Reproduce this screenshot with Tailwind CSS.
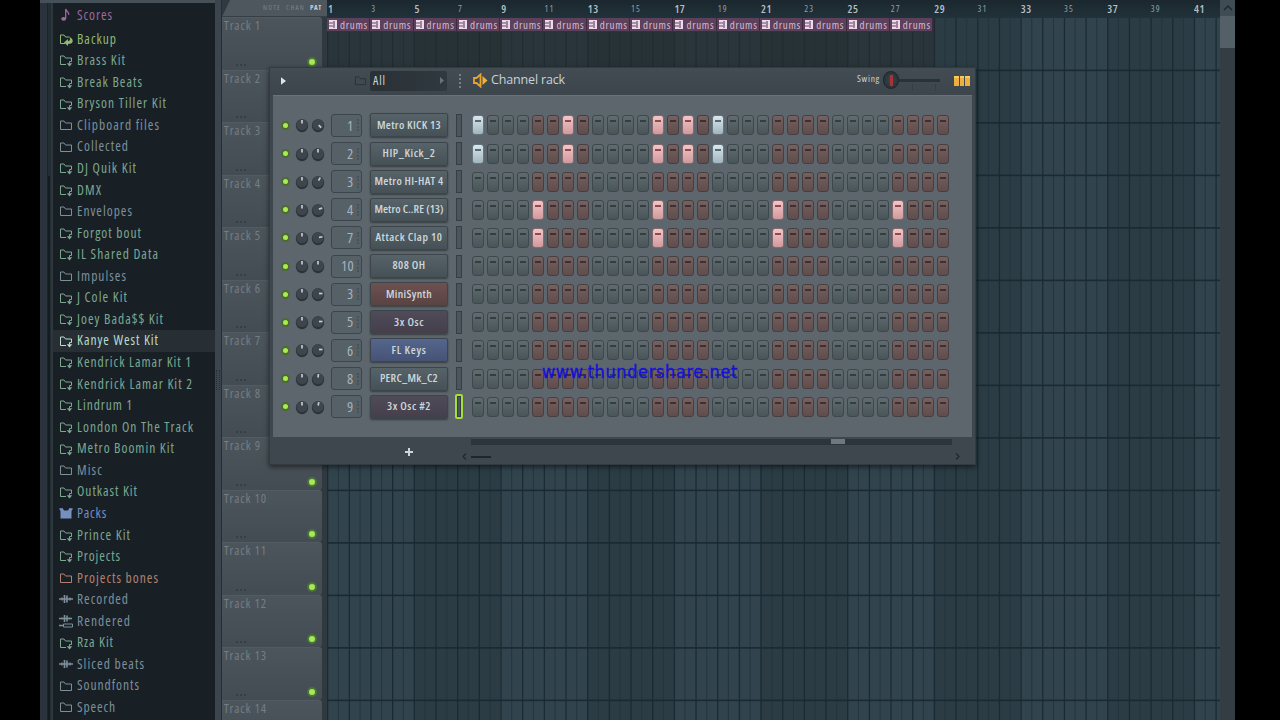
<!DOCTYPE html>
<html lang="en">
<head>
    <meta charset="UTF-8">
    <meta name="viewport" content="width=device-width, initial-scale=1.0">
    <title>Channel rack</title>

    <!-- Tailwind CSS -->
    <script src="https://cdn.jsdelivr.net/npm/@tailwindcss/browser@4"></script>
</head>
<body class="bg-black overflow-hidden font-['Open_Sans','Noto_Sans',sans-serif] [font-stretch:79%]">

    <!-- Icons -->
    <svg class="hidden">
        <symbol id="folder" viewBox="0 0 14 14"><path d="M1.500 11.500v-8.500h3.500l1.500 2h6v6.500z" fill="none" stroke="currentColor"/></symbol>
        <symbol id="linked" viewBox="0 0 14 14"><path d="M7 11.500H1.500v-8.500h3.500l1.500 2h6v3.500h-2v2" fill="none" stroke="currentColor"/><path d="M7.700 10.300h5.600l-2.800 3.200z" fill="currentColor"/></symbol>
        <symbol id="backup" viewBox="0 0 14 14"><path d="M6 11.500H1.500v-8.500h3.500l1.500 2h4" fill="none" stroke="currentColor"/><path d="M5 10.500l4-3.500v2c2 0 2.500-1.500 1.500-4c4.500 2 4.500 7-1.500 7v2z" fill="currentColor"/></symbol>
        <symbol id="note" viewBox="0 0 14 14"><path d="M6.700 10.500V1c.5 2.500 4 3 3 6" fill="none" stroke="currentColor" stroke-width="1.300"/><ellipse cx="4.700" cy="10.800" rx="2.500" ry="1.900" fill="currentColor"/></symbol>
        <symbol id="box" viewBox="0 0 14 14"><path d="M0 2.500L3.500 2 5 4.500h4L10.500 2l3.500.5-1.500 2.500v7.500h-11V5z" fill="currentColor"/></symbol>
        <symbol id="wave" viewBox="0 0 14 14"><path d="M0 7h14M3 5.500v3M11 5.500v3" fill="none" stroke="currentColor" stroke-width="1.400"/><path d="M5.500 3v8M8 3.500v7" fill="none" stroke="currentColor" stroke-width="1.700"/></symbol>
        <symbol id="render" viewBox="0 0 14 14"><path d="M0 4.500h13M3 3.500v2M10.500 3.500v2M0 11.500h4" fill="none" stroke="currentColor" stroke-width="1.300"/><path d="M5.500 1v7M8 1.500v6" fill="none" stroke="currentColor" stroke-width="1.600"/><path d="M4.500 10h9v3h-9z" fill="none" stroke="currentColor"/></symbol>
    </svg>

    <div class="relative ml-10 w-[1195px] h-[720px] flex overflow-hidden bg-[#414a52]">

        <!-- Browser -->
        <aside class="w-[175px] shrink-0 flex flex-col bg-[#182026]">
            <div class="h-[3px] shrink-0 bg-[#465058]"></div>
            <div class="flex grow">
                <div class="w-[8px] bg-[#2a333b] border-r border-[#1c242b]"></div>
                <div class="w-[5px] bg-[#232d34] border-r-2 border-[#2d373c]">
                    <div class="h-[545px] w-[2px] mt-[173px] bg-[#141c21]"></div>
                </div>
                <div id="browser" class="grow text-[13.5px] leading-[21.55px]"></div>
            </div>
        </aside>
        <div class="w-[7px] shrink-0 bg-[#3c454d] border-r border-[#252d34] flex flex-col justify-center items-center">
            <div class="w-[4px] h-[20px] mt-[40px] border-x border-dotted border-[#252d34]"></div>
        </div>

        <!-- Track headers -->
        <div class="w-[105px] shrink-0 flex flex-col bg-[#30393f]">
            <div class="h-[17px] shrink-0 w-full bg-[#4e575e] border-b border-[#363f46] flex items-center justify-end gap-[5px] pr-[5px] text-[7px] text-[#7a848b] [clip-path:polygon(8px_0,100%_0,100%_100%,0_100%)]">
                <span class="inline-block" data-w="18">NOTE</span><span class="inline-block" data-w="19">CHAN</span><span class="inline-block font-bold text-[#c6ced2]" data-w="12">PAT</span>
            </div>
            <div id="tracks"></div>
        </div>

        <!-- Playlist -->
        <main class="w-[893px] shrink-0 flex flex-col">
            <div id="ruler" class="h-[17.5px] shrink-0 flex bg-linear-to-b from-[#1b272e] to-[#22323a] text-[#93a2a9] overflow-hidden"></div>
            <div class="relative grow">
                <svg id="grid" class="absolute inset-0 w-full h-full"></svg>
                <div id="clips" class="relative flex w-[607px] h-[53px] bg-[#242b2f]/60"></div>
            </div>
        </main>

        <!-- Vertical scrollbar -->
        <div class="w-[15px] shrink-0 bg-[#343c44]">
            <div class="h-[16px] bg-[#3f4c53] flex items-center justify-center">
                <svg class="w-[10px] h-[6px] text-[#1f292f]" viewBox="0 0 10 6"><path d="M1 5l4-4 4 4" fill="none" stroke="currentColor" stroke-width="1.500"/></svg>
            </div>
            <div class="h-[32px] bg-[#536067]"></div>
        </div>

        <!-- Channel rack window -->
        <section class="absolute left-[229px] top-[67px] w-[707px] h-[398px] flex flex-col bg-[#3e474e] border border-[#333b42] shadow-[0_2px_5px_#0008]">
            <header class="h-[27px] pb-[2px] shrink-0 flex items-center bg-linear-to-b from-[#434c53] to-[#3c454c] text-[#c9d2d6]">
                <svg class="ml-[11px] w-[5px] h-[8px]" viewBox="0 0 6 9"><path d="M0 0l6 4.500L0 9z" fill="#dfe6e9"/></svg>
                <svg class="ml-[68px] w-[13px] h-[13px] text-[#2a3238]"><use href="#folder"/></svg>
                <div class="ml-[3px] w-[77px] h-[20px] rounded-[2px] bg-linear-to-r from-[#293137] to-[#30393f] flex items-center justify-between px-[3px] text-[12px] font-medium">
                    <span class="inline-block" data-w="13">All</span>
                    <svg class="w-[4px] h-[7px]" viewBox="0 0 4 7"><path d="M0 0l4 3.500L0 7z" fill="#68737a"/></svg>
                </div>
                <div class="ml-[12px] h-[14px] border-l-2 border-dotted border-[#748087]"></div>
                <svg class="ml-[12px] w-[15px] h-[15px]" viewBox="0 0 15 15"><path d="M1 5h2.500L7.500 1.500v12L3.500 10H1z" fill="none" stroke="#e6a52e" stroke-width="1.800"/><path d="M9.500 3l5 4.500-5 4.500z" fill="#f0b23c"/></svg>
                <div class="ml-[3px] w-[366px] text-[12.5px] font-medium [font-stretch:90%]"><span class="inline-block" data-w="74">Channel rack</span></div>
                <div class="w-[24px] -mt-[2px] text-[9.5px] font-medium whitespace-nowrap"><span class="inline-block" data-w="23">Swing</span></div>
                <div class="relative ml-[9px] w-[50px] h-[3px] bg-[#2a3237]">
                    <div class="absolute left-[-7px] top-[-8px] w-[16px] h-[18px] rounded-full bg-radial from-[#3c464a] to-[#222b2f] border border-[#1f282c] flex items-center justify-center">
                        <div class="w-[3px] h-[11px] bg-[#a5343a]"></div>
                    </div>
                    <div class="absolute left-[22px] top-[5px] w-[24px] h-[7px] border-x border-[#353e45]"></div>
                </div>
                <div class="ml-[14px] mt-px flex gap-px">
                    <div class="w-[4.500px] h-[10px] bg-[#eab040] border-t-2 border-[#f6cc62]"></div>
                    <div class="w-[4.500px] h-[10px] bg-[#eab040] border-t-2 border-[#f6cc62]"></div>
                    <div class="w-[4.500px] h-[10px] bg-[#eab040] border-t-2 border-[#f6cc62]"></div>
                </div>
            </header>
            <div id="channels" class="mx-[3px] h-[342px] shrink-0 pt-[15.4px] bg-[#5c666c] border-t border-[#687278]"></div>
            <footer class="relative grow text-[#cdd5d8]">
                <div class="ml-[201px] w-[481px] h-[6px] mt-[2px] bg-[#2d353c]"><div class="ml-[360px] w-[14px] h-[5px] bg-[#6d7880]"></div></div>
                <div class="flex items-center h-[16px]">
                    <svg class="ml-[135px] -mt-[3px] w-[8px] h-[8px]" viewBox="0 0 8 8"><path d="M4 0v8M0 4h8" stroke="currentColor" stroke-width="2"/></svg>
                    <svg class="ml-[49px] mt-[7px] w-[5px] h-[7px]" viewBox="0 0 5 7"><path d="M4 .5L1 3.500l3 3" fill="none" stroke="#20282e" stroke-width="1.200"/></svg>
                    <div class="ml-[4px] mt-[7px] w-[20px] h-[2px] bg-[#1f272c]"></div>
                    <svg class="ml-[464px] mt-[7px] w-[5px] h-[7px]" viewBox="0 0 5 7"><path d="M1 .5l3 3-3 3" fill="none" stroke="#20282e" stroke-width="1.200"/></svg>
                </div>
            </footer>
        </section>

        <!-- Watermark -->
        <div class="absolute left-[502px] top-[359px] leading-[26px] font-['DejaVu_Sans_Condensed','DejaVu_Sans',sans-serif] text-[18px] whitespace-nowrap text-[#1510d8] [-webkit-text-stroke:0.3px_#1510d8]"><span class="inline-block" data-w="196">www.thundershare.net</span></div>
    </div>

    <script>
        const el = id => document.getElementById(id);

        // name, icon, colour, text width
        const G = 'text-[#7ca791]', N = 'text-[#7d8f9a]';
        const items = [
            ['Scores', 'note', 'text-[#a0689b]', 36], ['Backup', 'backup', 'text-[#91b972]', 40],
            ['Brass Kit', 'linked', G, 49], ['Break Beats', 'linked', G, 66], ['Bryson Tiller Kit', 'linked', G, 90],
            ['Clipboard files', 'folder', N, 83], ['Collected', 'folder', N, 52], ['DJ Quik Kit', 'linked', G, 60],
            ['DMX', 'linked', G, 25], ['Envelopes', 'folder', N, 56], ['Forgot bout', 'linked', G, 65],
            ['IL Shared Data', 'linked', G, 82], ['Impulses', 'folder', N, 50], ['J Cole Kit', 'linked', G, 51],
            ['Joey Bada$$ Kit', 'linked', G, 87], ['Kanye West Kit', 'linked', 'text-[#b9dccb]', 82],
            ['Kendrick Lamar Kit 1', 'linked', G, 115], ['Kendrick Lamar Kit 2', 'linked', G, 116],
            ['Lindrum 1', 'linked', G, 56], ['London On The Track', 'linked', G, 117], ['Metro Boomin Kit', 'linked', G, 98],
            ['Misc', 'folder', N, 26], ['Outkast Kit', 'linked', G, 61], ['Packs', 'box', 'text-[#758fc0]', 30],
            ['Prince Kit', 'linked', G, 54], ['Projects', 'linked', G, 44], ['Projects bones', 'folder', 'text-[#b28071]', 82],
            ['Recorded', 'wave', N, 52], ['Rendered', 'render', N, 54], ['Rza Kit', 'linked', G, 37],
            ['Sliced beats', 'wave', N, 68], ['Soundfonts', 'folder', N, 63], ['Speech', 'folder', N, 39]
        ];
        el('browser').innerHTML = items.map(([name, icon, color, w], i) => `
            <div class="flex items-center whitespace-nowrap h-[21.57px] ${i === 0 ? 'mt-[1.5px] mb-[2px]' : ''} pl-[6px] gap-[4px] ${name === 'Kanye West Kit' ? 'bg-[#272f35]' : ''} ${color}">
                <svg class="w-[14px] h-[14px] shrink-0"><use href="#${icon}"/></svg>
                <span class="inline-block pt-px font-medium" data-w="${w}">${name}</span>
            </div>`).join('');

        // Track headers
        let html = '';
        for (let i = 1; i <= 14; i++) {
            html += `
            <div class="relative w-[100px] h-[52.5px] pl-[2px] bg-linear-to-b from-[#4c555b] to-[#434c53] border-t border-[#525b62] rounded-r-[3px] text-[12.5px] leading-[16px] font-medium text-[#747e85]">
                <span class="inline-block whitespace-nowrap" data-w="${i > 9 ? 43 : 37}">Track ${i}</span>
                <div class="absolute left-[14px] bottom-[4px] w-[10px] border-t-2 border-dotted border-[#353e44]"></div>
                <div class="absolute right-[5px] bottom-[3px] w-[10px] h-[10px] rounded-full bg-[#a8e858] border-2 border-[#4a7436]"></div>
            </div>`;
        }
        el('tracks').innerHTML = html;

        // Ruler and clips, one cell per two bars
        html = '';
        for (let n = 1; n <= 41; n += 2) {
            const major = n % 4 === 1;
            html += `<div class="w-[43.3px] shrink-0 pl-px leading-[17px] ${major ? 'text-[11px] font-semibold text-[#b5c1c6]' : 'text-[9px]'}"><span class="inline-block" data-w="${(n > 9 ? 11 : 5) - (major ? 0 : 1)}">${n}</span></div>`;
        }
        el('ruler').innerHTML = html;
        html = '';
        for (let i = 0; i < 14; i++) {
            html += `
            <div class="w-[43.3px] h-[14px] shrink-0 flex items-center gap-[3px] pl-[2px] bg-[#5d405b] border-r border-b border-[#3d2c40] text-[11px] leading-[13px] font-medium text-[#d0bccf]">
                <svg class="w-[8px] h-[9px] shrink-0" viewBox="0 0 8 9"><path d="M0 0h8v9H0z" fill="#ecdcea"/><path d="M0 3h4M0 6h4M5 1v7" stroke="#6b4569" stroke-width="1.200"/></svg>
                <span class="inline-block" data-w="28">drums</span>
            </div>`;
        }
        el('clips').innerHTML = html;

        // Grid bands and lines
        const bar = 21.67;
        html = '<rect width="893" height="703" fill="#2b3c45"/>';
        for (let b = 0; b < 42; b += 8) html += `<rect x="${b * bar}" width="${4 * bar}" height="703" fill="#31444d"/>`;
        for (let b = 0; b < 42; b++) {
            html += `<rect x="${b * bar}" width="1.3" height="703" fill="#1c2b33"/><rect x="${(b + .5) * bar}" width="1" height="703" fill="#24353e"/>`;
        }
        for (let r = 1; r < 14; r++) html += `<rect y="${r * 52.5 - .9}" width="893" height="1.6" fill="#1b2a31"/>`;
        el('grid').innerHTML = html;

        // number, name, name width, second knob angle, button colour, active steps
        const grey = 'from-[#566369] to-[#465157]', plum = 'from-[#504b58] to-[#443f4b]';
        const channels = [
            [1, 'Metro KICK 13', 64, 135, grey, [0, 6, 12, 14, 16]],
            [2, 'HIP_Kick_2', 53, 0, grey, [0, 6, 12, 14, 16]],
            [3, 'Metro HI-HAT 4', 69, 30, grey, []],
            [4, 'Metro C..RE (13)', 69, 70, grey, [4, 12, 20, 28]],
            [7, 'Attack Clap 10', 67, 80, grey, [4, 12, 20, 28]],
            [10, '808 OH', 33, 0, grey, []],
            [3, 'MiniSynth', 46, 90, 'from-[#6d5150] to-[#5a4343]', []],
            [5, '3x Osc', 30, 90, plum, []],
            [6, 'FL Keys', 35, 90, 'from-[#55658c] to-[#465376]', []],
            [8, 'PERC_Mk_C2', 58, 5, grey, []],
            [9, '3x Osc #2', 44, 10, plum, []]
        ];
        const knob = a => `
            <svg class="w-[14px] h-[16px]" viewBox="0 0 14 16"><ellipse cx="7" cy="8.700" rx="6.200" ry="6.500" fill="#2b3439"/><circle cx="7" cy="7.500" r="5.600" fill="#3d464c"/><path d="M7 3v3.500" stroke="#c3cccf" stroke-width="1.700" transform="rotate(${a} 7 7.500)"/></svg>`;
        const step = (i, on) => {
            const red = i % 8 > 3;
            const c = on ? (red ? 'from-[#f4c5c8] to-[#cf9a9d] border-[#85696c]' : 'from-[#dbe7ec] to-[#a2b5be] border-[#65767d]')
                         : (red ? 'from-[#77615f] to-[#5f4c4c] border-[#463f41]' : 'from-[#616c71] to-[#4a555a] border-[#3d474c]');
            const slot = on ? (red ? 'bg-[#8b4b50]' : 'bg-[#566a74]') : (red ? 'bg-[#3d3032]' : 'bg-[#333d42]');
            return `<div class="w-[12px] h-[20px] rounded-[3px] border bg-linear-to-b ${c} pt-[4px]"><div class="mx-auto w-[6px] h-[2px] ${slot}"></div></div>`;
        };
        el('channels').innerHTML = channels.map(([n, name, w, a, color, on], r) => `
            <div class="flex items-center h-[28.13px]">
                <div class="ml-[8px] w-[9px] h-[9px] rounded-full bg-[#a8ee4a] border-2 border-[#4b6a36]"></div>
                <div class="ml-[5px] flex gap-[2px]">${knob(0)}${knob(a)}</div>
                <div class="ml-[6px] w-[31px] h-[23px] rounded-[3px] border border-[#3b454b] bg-[#566067] flex items-center justify-end gap-[3px] pr-[2px] text-[14.5px] text-[#a8b3b9]">
                    <span class="inline-block" data-w="${n > 9 ? 13 : 7}">${n}</span>
                    <span class="h-[12px] border-l-2 border-dotted border-[#485359]"></span>
                </div>
                <div class="ml-[8px] w-[78px] h-[24px] pb-[2px] rounded-[2px] border border-[#3c454b] bg-linear-to-b ${color} shadow-[0_1px_2px_#0006] flex items-center justify-center whitespace-nowrap text-[11.5px] font-semibold text-[#cdd7db]">
                    <span class="inline-block" data-w="${w}">${name}</span>
                </div>
                <div class="ml-[7px] w-[8px] h-[25px] rounded-[2px] ${r === 10 ? 'border-2 border-[#a6dc3c]' : 'p-px'}"><div class="h-full border border-[#353e44] bg-[#4b555b]"></div></div>
                <div class="ml-[9px] flex gap-[3px]">${Array.from({ length: 32 }, (_, i) => step(i, on.includes(i))).join('')}</div>
            </div>`).join('');

        const fit = s => {
            s.style.letterSpacing = '0px';
            const width = s.getBoundingClientRect().width;
            s.style.letterSpacing = (s.dataset.w - width) / s.textContent.length + 'px';
        };
        const watcher = new ResizeObserver(entries => entries.forEach(e => fit(e.target)));
        document.querySelectorAll('[data-w]').forEach(s => watcher.observe(s));
    </script>

</body>
</html>
